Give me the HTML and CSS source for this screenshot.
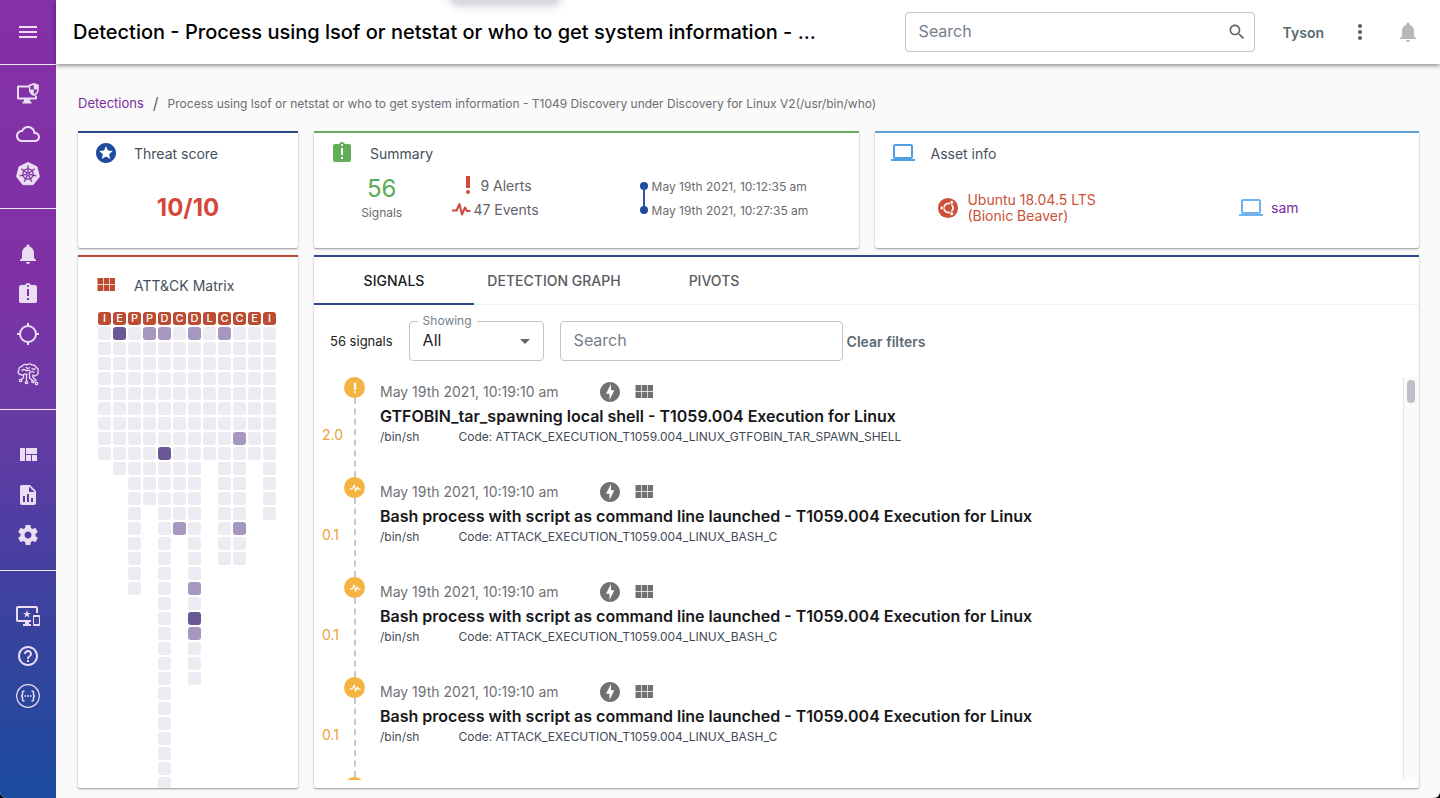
FILE: index.html
```html
<!DOCTYPE html>
<html lang="en">
<head>
    <meta charset="utf-8">
    <title>Detection</title>
    <link rel="stylesheet" href="styles.css">
</head>
<body>
    <!-- Icon sprite -->
    <svg class="sprite" aria-hidden="true">
        <symbol id="i-menu" viewBox="0 0 24 24"><path d="M3 18h18v-2H3v2zm0-5h18v-2H3v2zm0-7v2h18V6H3z"/></symbol>
        <symbol id="i-endpoint" viewBox="0 0 24 24">
            <path d="M14 3.500H2.500C1.600 3.500 1 4.200 1 5v11c0 .9.700 1.600 1.500 1.600H8v2H6.500v1.900h9v-1.900H14v-2h5.500c.9 0 1.500-.7 1.500-1.600v-2.500h-2v2H3V5.500h11z"/>
            <path d="M17.800 1 12.800 2.800v4.400c0 3.100 2 5.700 5 6.800 3-1.100 5-3.700 5-6.800V2.800zm0 1.900v4.600h3.500c-.2 2-1.500 3.900-3.500 4.800V7.500h-3.500V4.100z"/>
        </symbol>
        <symbol id="i-cloud" viewBox="0 0 24 24"><path d="M19.350 10.040C18.670 6.590 15.640 4 12 4 9.110 4 6.600 5.640 5.350 8.040 2.340 8.360 0 10.910 0 14c0 3.310 2.690 6 6 6h13c2.760 0 5-2.240 5-5 0-2.640-2.050-4.780-4.650-4.960zM19 18H6c-2.210 0-4-1.790-4-4s1.790-4 4-4h.71C7.370 7.690 9.480 6 12 6c3.040 0 5.500 2.460 5.500 5.500v.5H19c1.660 0 3 1.340 3 3s-1.340 3-3 3z"/></symbol>
        <symbol id="i-kube" viewBox="0 0 24 24">
            <path d="M12 .5 21 4.800l2.400 9.900-6.300 8H6.900l-6.300-8L3 4.800z" stroke="currentColor" stroke-linejoin="round"/>
            <g fill="none" stroke="#7f33a5" stroke-width="1.300">
                <circle cx="12" cy="12" r="5.200"/>
                <path d="M12 3.500v7M5.400 6.700l5.400 4.300M3.700 13.900l6.700-1.500M8.300 19.700l3-6.200M15.700 19.700l-3-6.200M20.300 13.900l-6.700-1.500M18.600 6.700 13.200 11"/>
                <circle cx="12" cy="12" r="1.400"/>
            </g>
        </symbol>
        <symbol id="i-bell" viewBox="0 0 24 24"><path d="M12 22c1.100 0 2-.9 2-2h-4c0 1.100.89 2 2 2zm6-6v-5c0-3.070-1.640-5.640-4.500-6.320V4c0-.83-.67-1.500-1.500-1.500s-1.500.67-1.500 1.500v.68C7.630 5.360 6 7.920 6 11v5l-2 2v1h16v-1l-2-2z"/></symbol>
        <symbol id="i-late" viewBox="0 0 24 24"><path d="M19 3h-4.180C14.400 1.840 13.300 1 12 1c-1.300 0-2.400.84-2.820 2H5c-1.100 0-2 .9-2 2v14c0 1.100.9 2 2 2h14c1.100 0 2-.9 2-2V5c0-1.100-.9-2-2-2zm-6 15h-2v-2h2v2zm0-4h-2V7h2v7zm-1-9c-.55 0-1-.45-1-1s.45-1 1-1 1 .45 1 1-.45 1-1 1z"/></symbol>
        <symbol id="i-target" viewBox="0 0 24 24"><g fill="none" stroke="currentColor" stroke-width="2"><circle cx="12" cy="12" r="8"/><path d="M12 1v4M12 19v4M1 12h4M19 12h4"/></g></symbol>
        <symbol id="i-brain" viewBox="0 0 24 24">
            <g fill="none" stroke="currentColor" stroke-width="1.300" stroke-linecap="round" stroke-linejoin="round">
                <path d="M4.500 12.500C2 12.300 1.300 9.600 3 8.300 2.300 6 4 4.500 5.800 4.700 6.500 2.500 9 1.700 10.700 3c1.500-1.600 4-1.500 5.300 0 2-.5 3.600.6 3.900 2.300 2 .5 2.800 2.400 1.900 4 1 1.500.2 3.500-1.600 3.700-.7 1-2 1.200-3 .6"/>
                <path d="M4.500 12.500c1.300 1 3 .7 3.800-.4h3M6 8.500c1.300-1.400 3-1.200 4 0h4M10 5.500c1 .9 2.500.9 3.500.2M13.500 11c1.300-1.500 3.200-1.700 4.600-.8M16 6.500c1 .9 2.200.9 3 .4"/>
                <path d="M7.500 13v2.500l-2 2M10.500 13v6M13.500 11v5l3 2.500M17 13v2.500l3 2.500v1"/>
                <circle cx="4.600" cy="18.500" r="1.200"/><circle cx="10.500" cy="20.500" r="1.200"/><circle cx="17" cy="19.500" r="1.200"/><circle cx="20.500" cy="21.500" r="1.200"/>
            </g>
        </symbol>
        <symbol id="i-quilt" viewBox="0 0 24 24"><path d="M10 18h5v-6h-5v6zm-6 0h5V5H4v13zm12 0h5v-6h-5v6zM10 5v6h11V5H10z"/></symbol>
        <symbol id="i-report" viewBox="0 0 24 24"><path d="M14 2H6c-1.100 0-2 .9-2 2v16c0 1.100.9 2 2 2h12c1.100 0 2-.9 2-2V8zM9 19H7v-6h2zm4 0h-2v-8h2zm4 0h-2v-4h2zM13 9V3.500L18.500 9z"/></symbol>
        <symbol id="i-gear" viewBox="0 0 24 24"><path d="M19.430 12.980c.04-.32.07-.64.07-.98s-.03-.66-.07-.98l2.110-1.650c.19-.15.24-.42.12-.64l-2-3.460c-.12-.22-.39-.3-.61-.22l-2.490 1c-.52-.4-1.080-.73-1.690-.98l-.38-2.650C14.460 2.180 14.250 2 14 2h-4c-.25 0-.46.18-.49.42l-.38 2.650c-.61.25-1.170.59-1.690.98l-2.490-1c-.23-.09-.49 0-.61.22l-2 3.460c-.13.22-.07.49.12.64l2.110 1.650c-.04.32-.07.65-.07.98s.03.66.07.98l-2.110 1.650c-.19.15-.24.42-.12.64l2 3.460c.12.22.39.3.61.22l2.490-1c.52.4 1.080.73 1.690.98l.38 2.650c.03.24.24.42.49.42h4c.25 0 .46-.18.49-.42l.38-2.650c.61-.25 1.170-.59 1.690-.98l2.490 1c.23.09.49 0 .61-.22l2-3.460c.12-.22.07-.49-.12-.64l-2.110-1.650zM12 15.500c-1.930 0-3.500-1.570-3.500-3.500s1.570-3.500 3.500-3.500 3.500 1.570 3.500 3.500-1.570 3.500-3.500 3.500z"/></symbol>
        <symbol id="i-devices" viewBox="0 0 24 24"><path d="M23 11.010 18 11c-.55 0-1 .45-1 1v9c0 .55.45 1 1 1h5c.55 0 1-.45 1-1v-9c0-.55-.45-.99-1-.99zM23 20h-5v-7h5v7zM20 2H2C.89 2 0 2.890 0 4v12c0 1.100.89 2 2 2h7v2H7v2h8v-2h-2v-2h2v-2H2V4h18v5h2V4c0-1.110-.9-2-2-2zm-8.030 7L11 6l-.97 3H7l2.470 1.760-.94 2.910 2.470-1.800 2.470 1.800-.94-2.910L15 9h-3.030z"/></symbol>
        <symbol id="i-help" viewBox="0 0 24 24"><path d="M11 18h2v-2h-2v2zm1-16C6.480 2 2 6.480 2 12s4.480 10 10 10 10-4.480 10-10S17.520 2 12 2zm0 18c-4.410 0-8-3.590-8-8s3.590-8 8-8 8 3.590 8 8-3.590 8-8 8zm0-14c-2.210 0-4 1.790-4 4h2c0-1.100.9-2 2-2s2 .9 2 2c0 2-3 1.750-3 5h2c0-2.250 3-2.500 3-5 0-2.210-1.790-4-4-4z"/></symbol>
        <symbol id="i-api" viewBox="0 0 24 24">
            <g fill="none" stroke="currentColor"><circle cx="12" cy="12" r="11.300" stroke-width="1.200"/><path stroke-width="1.500" d="M8.500 7H8c-1 0-1.500.6-1.500 1.500v1.800c0 1-.5 1.700-1.500 1.700 1 0 1.500.7 1.500 1.700v1.800c0 .9.500 1.500 1.500 1.500h.5M15.500 7h.5c1 0 1.500.6 1.500 1.500v1.800c0 1 .5 1.700 1.500 1.700-1 0-1.500.7-1.500 1.700v1.800c0 .9-.5 1.500-1.500 1.500h-.5"/></g>
            <circle cx="9.300" cy="12" r=".9"/><circle cx="12" cy="12" r=".9"/><circle cx="14.700" cy="12" r=".9"/>
        </symbol>
        <symbol id="i-search" viewBox="0 0 24 24"><path d="M15.500 14h-.79l-.28-.27C15.410 12.590 16 11.110 16 9.500 16 5.910 13.090 3 9.500 3S3 5.910 3 9.500 5.910 16 9.500 16c1.610 0 3.090-.59 4.230-1.570l.27.28v.79l5 4.990L20.490 19l-4.990-5zm-6 0C7.010 14 5 11.990 5 9.500S7.010 5 9.500 5 14 7.010 14 9.500 11.990 14 9.500 14z"/></symbol>
        <symbol id="i-more" viewBox="0 0 24 24"><circle cx="12" cy="6" r="2"/><circle cx="12" cy="12" r="2"/><circle cx="12" cy="18" r="2"/></symbol>
        <symbol id="i-star" viewBox="0 0 24 24"><path d="M11.990 2C6.470 2 2 6.480 2 12s4.470 10 9.990 10C17.520 22 22 17.520 22 12S17.520 2 11.990 2zm4.240 16L12 15.450 7.770 18l1.120-4.810-3.730-3.230 4.920-.42L12 5l1.920 4.530 4.920.42-3.730 3.230L16.230 18z"/></symbol>
        <symbol id="i-laptop" viewBox="0 0 24 24"><path d="M20 18c1.100 0 1.990-.9 1.990-2L22 5c0-1.100-.9-2-2-2H4c-1.100 0-2 .9-2 2v11c0 1.100.9 2 2 2H0v2h24v-2h-4zM4 5h16v11H4V5z"/></symbol>
        <symbol id="i-module" viewBox="0 0 24 24"><path d="M3.500 11.200H9V5H3.500zm0 6.800H9v-6H3.500zm6.200 0h5.300v-6H9.700zm6 0H21v-6h-5.300zm-6-6.800h5.300V5H9.700zm6-6.200v6.200H21V5z"/></symbol>
        <symbol id="i-bolt" viewBox="0 0 24 24"><path d="M12 2.020c-5.510 0-9.980 4.470-9.980 9.980s4.470 9.980 9.980 9.980 9.980-4.470 9.980-9.980S17.510 2.020 12 2.020zM11.480 20v-6.260H8L13 4v6.260h3.350L11.480 20z"/></symbol>
        <symbol id="i-alert" viewBox="0 0 24 24"><circle cx="12" cy="19" r="2"/><path d="M10 3h4v12h-4z"/></symbol>
        <symbol id="i-pulse" viewBox="0 0 24 24"><path fill="none" stroke="currentColor" stroke-width="2" stroke-linejoin="round" d="M3 13.500h4.500L10.500 7l2.500 10.500 3-7 2 3.500h3.500"/></symbol>
        <symbol id="i-ubuntu" viewBox="0 0 24 24">
            <circle cx="12" cy="12" r="11"/>
            <circle cx="12.500" cy="12" r="4.800" fill="none" stroke="#fff" stroke-width="2.200"/>
            <path d="M12.500 12 5 12M12.500 12l3.700-6.500M12.500 12l3.700 6.500" stroke="#d4513b" stroke-width="1.200"/>
            <circle cx="12.500" cy="12" r="3.700"/>
            <g fill="#fff" stroke="#d4513b" stroke-width=".8"><circle cx="5.300" cy="12" r="2"/><circle cx="16" cy="5.800" r="2"/><circle cx="16" cy="18.200" r="2"/></g>
        </symbol>
    </svg>

    <div class="app">
        <div class="notch"></div>

        <nav class="sidebar">
            <div class="nav-top"><button class="nav-item" aria-label="Menu"><svg class="icon"><use href="#i-menu"/></svg></button></div>
            <div class="nav-group first">
                <a class="nav-item" href="#" aria-label="Endpoints"><svg class="icon"><use href="#i-endpoint"/></svg></a>
                <a class="nav-item" href="#" aria-label="Cloud"><svg class="icon"><use href="#i-cloud"/></svg></a>
                <a class="nav-item" href="#" aria-label="Kubernetes"><svg class="icon"><use href="#i-kube"/></svg></a>
            </div>
            <div class="nav-group">
                <a class="nav-item" href="#" aria-label="Alerts"><svg class="icon"><use href="#i-bell"/></svg></a>
                <a class="nav-item" href="#" aria-label="Detections"><svg class="icon"><use href="#i-late"/></svg></a>
                <a class="nav-item" href="#" aria-label="Hunt"><svg class="icon"><use href="#i-target"/></svg></a>
                <a class="nav-item" href="#" aria-label="Intelligence"><svg class="icon"><use href="#i-brain"/></svg></a>
            </div>
            <div class="nav-group">
                <a class="nav-item" href="#" aria-label="Dashboards"><svg class="icon"><use href="#i-quilt"/></svg></a>
                <a class="nav-item" href="#" aria-label="Reports"><svg class="icon"><use href="#i-report"/></svg></a>
                <a class="nav-item" href="#" aria-label="Configuration"><svg class="icon"><use href="#i-gear"/></svg></a>
            </div>
            <div class="nav-group">
                <a class="nav-item" href="#" aria-label="Assets"><svg class="icon"><use href="#i-devices"/></svg></a>
                <a class="nav-item" href="#" aria-label="Help"><svg class="icon"><use href="#i-help"/></svg></a>
                <a class="nav-item" href="#" aria-label="API"><svg class="icon"><use href="#i-api"/></svg></a>
            </div>
        </nav>

        <div class="page">
            <header class="topbar">
                <h1>Detection - Process using lsof or netstat or who to get system information - ...</h1>
                <div class="global-search">
                    <input type="text" placeholder="Search" aria-label="Search">
                    <svg class="icon"><use href="#i-search"/></svg>
                </div>
                <button class="user">Tyson</button>
                <button class="icon-btn" aria-label="More"><svg class="icon"><use href="#i-more"/></svg></button>
                <button class="icon-btn muted" aria-label="Notifications"><svg class="icon"><use href="#i-bell"/></svg></button>
            </header>

            <main>
                <div class="breadcrumb">
                    <a href="#">Detections</a>
                    <span class="slash">/</span>
                    <span class="current">Process using lsof or netstat or who to get system information - T1049 Discovery under Discovery for Linux V2(/usr/bin/who)</span>
                </div>

                <div class="panels">
                    <section class="card blue">
                        <h2><svg class="icon c-blue"><use href="#i-star"/></svg>Threat score</h2>
                        <div class="score">10/10</div>
                    </section>

                    <section class="card green">
                        <h2><svg class="icon c-green"><use href="#i-late"/></svg>Summary</h2>
                        <div class="summary">
                            <div class="signals-total">
                                <strong>56</strong>
                                <span>Signals</span>
                            </div>
                            <div class="counts">
                                <div><svg class="icon"><use href="#i-alert"/></svg>9 Alerts</div>
                                <div><svg class="icon"><use href="#i-pulse"/></svg>47 Events</div>
                            </div>
                            <div class="range">
                                <div>May 19th 2021, 10:12:35 am</div>
                                <div>May 19th 2021, 10:27:35 am</div>
                            </div>
                        </div>
                    </section>

                    <section class="card sky">
                        <h2><svg class="icon c-sky"><use href="#i-laptop"/></svg>Asset info</h2>
                        <div class="asset">
                            <div class="os"><svg class="icon"><use href="#i-ubuntu"/></svg><span>Ubuntu 18.04.5 LTS<br>(Bionic Beaver)</span></div>
                            <div class="host"><svg class="icon"><use href="#i-laptop"/></svg><a href="#">sam</a></div>
                        </div>
                    </section>

                    <section class="card red matrix-card">
                        <h2><svg class="icon c-red"><use href="#i-module"/></svg>ATT&amp;CK Matrix</h2>
                        <div class="matrix" id="matrix"></div>
                    </section>

                    <section class="card blue signals-card">
                        <div class="tabs" role="tablist">
                            <button class="tab active" role="tab">SIGNALS</button>
                            <button class="tab" role="tab">DETECTION GRAPH</button>
                            <button class="tab" role="tab">PIVOTS</button>
                        </div>
                        <div class="filters">
                            <span class="total">56 signals</span>
                            <div class="select-box">
                                <label for="showing">Showing</label>
                                <select id="showing"><option>All</option></select>
                            </div>
                            <input class="filter-search" type="text" placeholder="Search" aria-label="Search signals">
                            <button class="clear">Clear filters</button>
                        </div>
                        <div class="list-wrap">
                            <ul class="list" id="signals"></ul>
                            <div class="track"><div class="thumb"></div></div>
                        </div>
                    </section>
                </div>
            </main>
        </div>
    </div>

    <script src="script.js"></script>
</body>
</html>
```
FILE: styles.css
```css
* { box-sizing: border-box; }

html { background: #000; }

body {
    margin: 0;
    font-family: Inter, "Liberation Sans", sans-serif;
    font-size: 14px;
    color: #3f4a56;
}

button, input, select { font-family: inherit; }

button {
    border: none;
    background: none;
    padding: 0;
    cursor: pointer;
}

a { color: #7b2ba0; text-decoration: none; }

.sprite { display: none; }

.icon {
    width: 24px;
    height: 24px;
    fill: currentColor;
    flex: none;
}

.app {
    display: flex;
    position: relative;
    height: 100vh;
    overflow: hidden;
    background: #fafafb;
    border-radius: 0 0 6px 6px;
}

/* handle peeking in from the top edge */
.notch {
    position: absolute;
    z-index: 3;
    top: -16px;
    left: 450px;
    width: 110px;
    height: 19px;
    border-radius: 8px;
    background: #d9d9de;
    box-shadow: 0 2px 10px rgba(60, 60, 90, 0.3);
}

/* Sidebar */
.sidebar {
    flex: 0 0 56px;
    color: #ebddf3;
    background: linear-gradient(#8430a6 0%, #8032a5 35%, #6a3aa6 51%, #43409f 72%, #2b479e 88%, #1c4c9f 100%);
}

.nav-top {
    height: 65px;
    padding-top: 12px;
    border-bottom: 1px solid #f0e6f5;
}

.nav-item {
    display: flex;
    align-items: center;
    justify-content: center;
    width: 100%;
    height: 40px;
    color: inherit;
}

.nav-group {
    padding: 25px 0 15px;
    border-bottom: 1px solid #f0e6f5;
}

.nav-group.first { padding: 9px 0 14px; }
.nav-group:last-child { border-bottom: none; }

/* Top bar */
.page {
    flex: 1;
    min-width: 0;
    display: flex;
    flex-direction: column;
}

.topbar {
    display: flex;
    align-items: center;
    gap: 24px;
    height: 64px;
    flex: none;
    padding: 0 20px 0 17px;
    background: #fff;
    box-shadow: 0 2px 4px rgba(0, 0, 0, 0.4);
}

.topbar h1 {
    flex: 1;
    min-width: 0;
    margin: 0;
    overflow: hidden;
    white-space: nowrap;
    font-size: 20px;
    font-weight: 450;
    color: #000;
}

.global-search {
    display: flex;
    align-items: center;
    width: 350px;
    height: 40px;
    padding: 0 7px 0 13px;
    border: 1px solid #c4c4cc;
    border-radius: 4px;
    color: #666;
}

.global-search .icon { width: 20px; height: 20px; }

input::placeholder { color: #74808a; opacity: 1; }

.global-search input {
    flex: 1;
    border: none;
    outline: none;
    padding: 0 0 2px;
    font-size: 16px;
    background: none;
}

.user {
    margin-left: 4px;
    font-size: 14px;
    font-weight: 600;
    color: #546a70;
}

.icon-btn { display: flex; color: #5c5c66; }
.icon-btn.muted { color: #b9b9b9; }

/* Content */
main {
    flex: 1;
    min-height: 0;
    display: flex;
    flex-direction: column;
    padding: 29px 21px 10px 22px;
}

.breadcrumb {
    display: flex;
    align-items: center;
    gap: 9px;
    height: 20px;
    margin-bottom: 18px;
    font-size: 13px;
    white-space: nowrap;
}

.breadcrumb .slash { font-size: 16px; color: #666; }
.breadcrumb .current { font-size: 12px; color: #6d6d72; }

.panels {
    flex: 1;
    min-height: 0;
    display: grid;
    grid-template-columns: 220px 1fr 1fr;
    grid-template-rows: auto minmax(0, 1fr);
    gap: 7px 16px;
}

.card {
    min-width: 0;
    background: #fff;
    border-top: 2px solid;
    box-shadow: 0 1px 2px rgba(0, 0, 0, 0.4);
    border-radius: 0 0 2px 2px;
}

.card.blue { border-top-color: #2a4b87; }
.card.green { border-top-color: #6aab62; }
.card.sky { border-top-color: #5fa3d8; }
.card.red { border-top-color: #b94b3a; }

.card h2 {
    display: flex;
    align-items: flex-start;
    gap: 16px;
    height: 44px;
    margin: 0;
    padding: 8px 16px 0;
    font-size: 14px;
    line-height: 26px;
    font-weight: 400;
    color: #45505c;
}

.c-blue { color: #1f4a9e; }
.c-green { color: #62ad5a; }
.c-sky { color: #4fa0e2; }
.c-red { color: #bd4a31; }

.score {
    height: 61px;
    line-height: 62px;
    text-align: center;
    font-size: 24px;
    font-weight: 700;
    color: #d4483a;
}

/* Summary */
.summary {
    display: grid;
    grid-template-columns: 3fr 2fr 7fr;
    height: 71px;
    color: #6b6b70;
}

.signals-total {
    display: flex;
    flex-direction: column;
    align-items: center;
    font-size: 12px;
}

.signals-total strong {
    font-size: 24px;
    line-height: 24px;
    margin-bottom: 4px;
    font-weight: 400;
    color: #5dab57;
}

.counts {
    margin-top: -4px;
    padding-right: 4px;
}

.counts div {
    display: flex;
    align-items: center;
    justify-content: center;
    height: 24px;
    font-size: 14px;
    white-space: nowrap;
    color: #62626a;
}

.counts .icon { color: #d2473a; }

.range {
    margin-top: -3px;
    padding-left: 96px;
}

.range div {
    position: relative;
    height: 24px;
    padding-left: 13px;
    line-height: 25px;
    font-size: 12px;
}

.range div::before {
    content: "";
    position: absolute;
    left: 1px;
    top: 8px;
    width: 8px;
    height: 8px;
    border-radius: 50%;
    background: #1f4a9e;
}

.range div:first-child::after {
    content: "";
    position: absolute;
    left: 4px;
    top: 12px;
    width: 2px;
    height: 24px;
    background: #2a57ad;
}

/* Asset */
.asset {
    display: grid;
    grid-template-columns: 1fr 1fr;
    height: 61px;
}

.os, .host {
    display: flex;
    align-items: center;
    justify-content: center;
    gap: 8px;
}

.os {
    padding-left: 12px;
    line-height: 16px;
    color: #cb5138;
}

.os .icon { width: 22px; height: 22px; }
.host { padding-right: 28px; }
.host .icon { color: #70b2ee; }

/* Matrix */
.matrix-card { overflow: hidden; }
.matrix-card h2 { height: 55px; padding-top: 16px; }

.matrix {
    display: flex;
    gap: 2px;
    padding-left: 20px;
}

.matrix-col {
    display: flex;
    flex-direction: column;
    gap: 2px;
}

.cell {
    width: 13px;
    height: 13px;
    border-radius: 3px;
    background: #ebebf1;
}

.cell.mid { background: #a597bf; }
.cell.high { background: #6a5896; }

.cell.tactic {
    background: #bb4b31;
    color: #fff;
    font-size: 11px;
    line-height: 13px;
    font-weight: 500;
    text-align: center;
}

/* Signals */
.signals-card {
    grid-column: 2 / 4;
    display: flex;
    flex-direction: column;
    padding-bottom: 8px;
}

.tabs {
    display: flex;
    height: 48px;
    flex: none;
    border-bottom: 1px solid #f2f2f4;
}

.tab {
    width: 160px;
    height: 48px;
    border-bottom: 2px solid transparent;
    font-size: 14px;
    font-weight: 500;
    color: #5a5a62;
}

.tab.active {
    color: #1c1c1f;
    border-bottom-color: #2a4b87;
}

.filters {
    display: flex;
    align-items: center;
    height: 72px;
    flex: none;
    padding-left: 16px;
}

.total { font-size: 13px; color: #222; margin-right: 16px; }

.select-box {
    position: relative;
    width: 135px;
    height: 40px;
    margin-right: 16px;
}

/* label sits on the outline of the field */
.select-box label {
    position: absolute;
    top: -8px;
    left: 9px;
    padding: 0 5px;
    background: #fff;
    font-size: 12px;
    line-height: 16px;
    color: #74808a;
}

.select-box select {
    width: 100%;
    height: 40px;
    padding: 0 13px 2px;
    border: 1px solid #c4c4cc;
    border-radius: 4px;
    background: none;
    appearance: none;
    font-size: 16px;
    color: #1c1c1f;
}

.select-box::after {
    content: "";
    position: absolute;
    right: 14px;
    top: 18px;
    border: 5px solid transparent;
    border-top-color: #666;
    border-bottom: none;
}

.filter-search {
    width: 283px;
    height: 40px;
    padding: 0 13px 2px;
    border: 1px solid #c4c4cc;
    border-radius: 4px;
    font-size: 16px;
}

.clear {
    margin-left: 4px;
    font-size: 14px;
    font-weight: 600;
    color: #5c6b73;
}

.list-wrap {
    flex: 1;
    min-height: 0;
    display: flex;
}

.list {
    flex: 1;
    overflow: hidden;
    margin: 0;
    padding: 0;
    list-style: none;
}

.track {
    width: 15px;
    margin-right: 1px;
    padding: 3px;
    border-left: 1px solid #e6e6e9;
    background: #fafafb;
}

.thumb {
    width: 8px;
    height: 23px;
    border-radius: 4px;
    background: #c1bcc6;
}

.signal {
    display: flex;
    height: 100px;
}

.signal-score {
    width: 30px;
    padding: 49px 0 0 8px;
    line-height: 18px;
    color: #eba23c;
}

.rail {
    display: flex;
    flex-direction: column;
    align-items: center;
    width: 21px;
    margin-right: 15px;
}

.rail .dot {
    display: flex;
    align-items: center;
    justify-content: center;
    width: 21px;
    height: 21px;
    border-radius: 50%;
    background: #f5b342;
    color: #fff;
}

.dot .icon { width: 14px; height: 14px; }

.rail .line {
    flex: 1;
    border-left: 2px dashed #c8c8c8;
}

.signal-body { white-space: nowrap; }

.signal-head {
    display: flex;
    align-items: center;
    height: 24px;
    margin-top: 3px;
    gap: 10px;
    color: #707075;
}

.signal-head time { width: 208px; padding-bottom: 2px; }

.signal-title {
    margin: 0;
    font-size: 16px;
    line-height: 24px;
    font-weight: 600;
    color: #17171a;
}

.signal-meta {
    display: flex;
    gap: 39px;
    font-size: 12px;
    line-height: 17px;
}
```
FILE: script.js
```js
// tactic letter + number of techniques in the column
var columns = [
    ['I', 9], ['E', 10], ['P', 18], ['P', 12], ['D', 36], ['C', 14],
    ['D', 24], ['L', 9], ['C', 16], ['C', 16], ['E', 9], ['I', 13]
];

// "column-row": level
var hits = {
    '1-0': 'high', '3-0': 'mid', '4-0': 'mid', '6-0': 'mid', '8-0': 'mid',
    '9-7': 'mid', '4-8': 'high', '5-13': 'mid', '9-13': 'mid',
    '6-17': 'mid', '6-19': 'high', '6-20': 'mid'
};

document.getElementById('matrix').innerHTML = columns.map(function(col, c) {
    var html = '<div class="cell tactic">' + col[0] + '</div>';
    for (var r = 0; r < col[1]; r++) {
        html += '<div class="cell ' + (hits[c + '-' + r] || '') + '"></div>';
    }
    return '<div class="matrix-col">' + html + '</div>';
}).join('');

var bash = {
    score: '0.1',
    icon: 'pulse',
    title: 'Bash process with script as command line launched - T1059.004 Execution for Linux',
    code: 'ATTACK_EXECUTION_T1059.004_LINUX_BASH_C'
};

var signals = [
    {
        score: '2.0',
        icon: 'alert',
        title: 'GTFOBIN_tar_spawning local shell - T1059.004 Execution for Linux',
        code: 'ATTACK_EXECUTION_T1059.004_LINUX_GTFOBIN_TAR_SPAWN_SHELL'
    },
    bash, bash, bash
];

function rail(icon) {
    return '<div class="rail"><span class="dot"><svg class="icon"><use href="#i-' + icon + '"/></svg></span><span class="line"></span></div>';
}

document.getElementById('signals').innerHTML = signals.map(function(s) {
    return '<li class="signal">' +
        '<div class="signal-score">' + s.score + '</div>' + rail(s.icon) +
        '<div class="signal-body">' +
            '<div class="signal-head"><time>May 19th 2021, 10:19:10 am</time>' +
            '<svg class="icon"><use href="#i-bolt"/></svg><svg class="icon"><use href="#i-module"/></svg></div>' +
            '<h3 class="signal-title">' + s.title + '</h3>' +
            '<div class="signal-meta"><span>/bin/sh</span><span>Code: ' + s.code + '</span></div>' +
        '</div></li>';
}).join('') + '<li class="signal"><div class="signal-score"></div>' + rail('pulse') + '</li>';
```
